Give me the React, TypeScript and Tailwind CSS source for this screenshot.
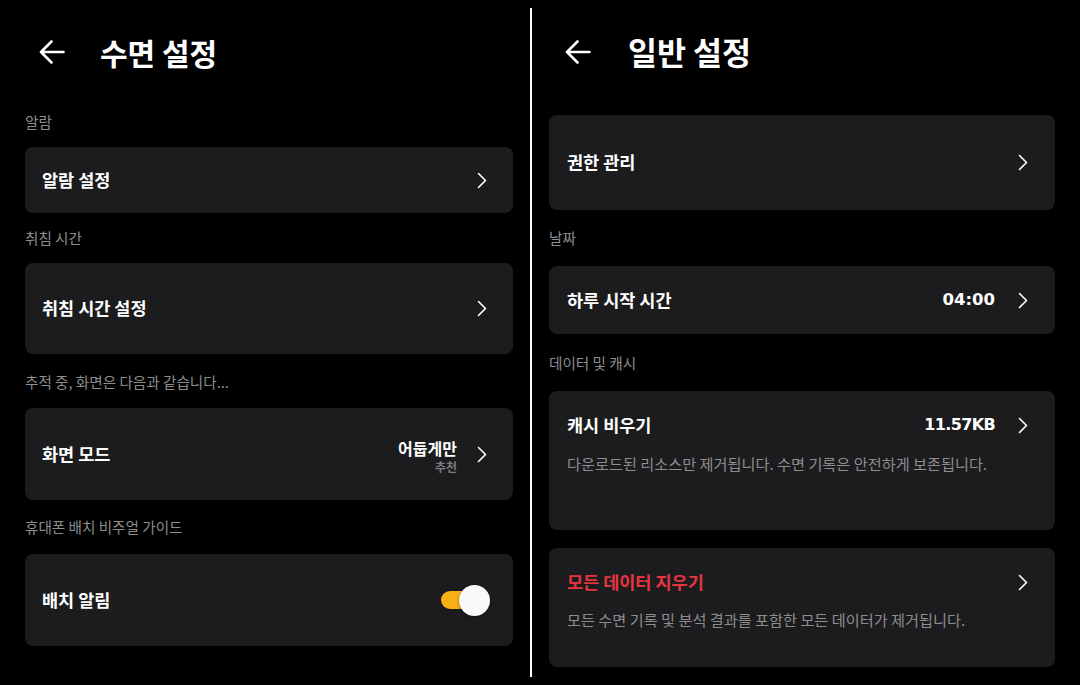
import React from "react";

const font = { fontFamily: '"Noto Sans CJK KR", "Noto Sans", sans-serif' };
const numFont = { fontFamily: '"DejaVu Sans", "Noto Sans", sans-serif', fontWeight: 700 };

function Chevron() {
  return (
    <svg width="10" height="17" viewBox="0 0 10 17" fill="none" className="shrink-0">
      <path d="M1.5 1.5 L8.5 8.5 L1.5 15.5" stroke="#ffffff" strokeWidth="1.6" strokeLinecap="round" strokeLinejoin="round" />
    </svg>
  );
}

function BackArrow() {
  return (
    <svg width="26" height="24" viewBox="0 0 26 24" fill="none" className="shrink-0">
      <path d="M2 12 H24.5 M12.5 1.5 L2 12 L12.5 22.5" stroke="#ffffff" strokeWidth="2.6" strokeLinecap="round" strokeLinejoin="round" />
    </svg>
  );
}

function Label({ children, mt }: { children: React.ReactNode; mt: string }) {
  return <div className={`${mt} h-[20px] text-[14.6px] leading-[20px] text-[#8d8d90]`}>{children}</div>;
}

export default function App() {
  return (
    <div className="flex h-[685px] w-[1080px] overflow-hidden bg-black" style={font}>
      {/* Left panel */}
      <div className="flex w-[530px] shrink-0 flex-col pr-[17px] pl-[25px]">
        <div className="flex h-[104px] items-center gap-[35px] pl-[14px]">
          <BackArrow />
          <span className="text-[30px] font-bold leading-none text-white">수면 설정</span>
        </div>
        <Label mt="mt-[8px]">알람</Label>
        <div className="mt-[15px] flex h-[66px] items-center justify-between rounded-[8px] bg-[#1c1c1e] pr-[26px] pl-[17px]">
          <span className="text-[17.5px] font-bold text-white">알람 설정</span>
          <Chevron />
        </div>
        <Label mt="mt-[15px]">취침 시간</Label>
        <div className="mt-[15px] flex h-[91px] items-center justify-between rounded-[8px] bg-[#1c1c1e] pr-[26px] pl-[17px]">
          <span className="text-[17.5px] font-bold text-white">취침 시간 설정</span>
          <Chevron />
        </div>
        <Label mt="mt-[18px]">추적 중, 화면은 다음과 같습니다...</Label>
        <div className="mt-[16px] flex h-[92px] items-center justify-between rounded-[8px] bg-[#1c1c1e] pr-[26px] pl-[17px]">
          <span className="text-[17.5px] font-bold text-white">화면 모드</span>
          <div className="flex items-center gap-[20px]">
            <div className="flex flex-col items-end pt-[4px]">
              <span className="text-[16px] leading-[22px] font-bold text-white">어둡게만</span>
              <span className="text-[12px] leading-[16px] font-bold text-[#7a7a7e]">추천</span>
            </div>
            <Chevron />
          </div>
        </div>
        <Label mt="mt-[17px]">휴대폰 배치 비주얼 가이드</Label>
        <div className="mt-[17px] flex h-[92px] items-center justify-between rounded-[8px] bg-[#1c1c1e] pr-[23px] pl-[17px]">
          <span className="text-[17.5px] font-bold text-white">배치 알림</span>
          <div className="relative h-[31px] w-[49px]">
            <div className="absolute top-[6px] left-0 h-[18px] w-[40px] rounded-full bg-[#f8b116]" />
            <div className="absolute top-0 right-0 h-[31px] w-[31px] rounded-full bg-[#fafafa] shadow-[0_1px_3px_rgba(0,0,0,0.5)]" />
          </div>
        </div>
      </div>

      {/* Divider */}
      <div className="mt-[8px] h-[669px] w-[2px] shrink-0 bg-white" />

      {/* Right panel */}
      <div className="flex flex-1 flex-col pr-[25px] pl-[17px]">
        <div className="flex h-[104px] items-center gap-[37px] pl-[16px]">
          <BackArrow />
          <span className="text-[31.5px] font-bold leading-none text-white">일반 설정</span>
        </div>
        <div className="mt-[11px] flex h-[95px] items-center justify-between rounded-[8px] bg-[#1c1c1e] pr-[27px] pl-[18px]">
          <span className="text-[17.5px] font-bold text-white">권한 관리</span>
          <Chevron />
        </div>
        <Label mt="mt-[18px]">날짜</Label>
        <div className="mt-[18px] flex h-[68px] items-center justify-between rounded-[8px] bg-[#1c1c1e] pr-[27px] pl-[18px]">
          <span className="text-[17.5px] font-bold text-white">하루 시작 시간</span>
          <div className="flex items-center gap-[23px]">
            <span className="text-[16.5px] text-white" style={numFont}>04:00</span>
            <Chevron />
          </div>
        </div>
        <Label mt="mt-[19px]">데이터 및 캐시</Label>
        <div className="mt-[18px] flex h-[139px] flex-col rounded-[8px] bg-[#1c1c1e] pt-[22px] pr-[27px] pl-[18px]">
          <div className="flex h-[24px] items-center justify-between">
            <span className="text-[17.5px] font-bold text-white">캐시 비우기</span>
            <div className="flex items-center gap-[23px]">
              <span className="text-[16px] tracking-[-0.04em] text-white" style={numFont}>11.57KB</span>
              <Chevron />
            </div>
          </div>
          <div className="mt-[16px] text-[15.2px] leading-[20px] text-[#8d8d90]">
            다운로드된 리소스만 제거됩니다. 수면 기록은 안전하게 보존됩니다.
          </div>
        </div>
        <div className="mt-[18px] flex h-[119px] flex-col rounded-[8px] bg-[#1c1c1e] pt-[22px] pr-[27px] pl-[18px]">
          <div className="flex h-[24px] items-center justify-between">
            <span className="text-[17.5px] font-bold text-[#e5353f]">모든 데이터 지우기</span>
            <Chevron />
          </div>
          <div className="mt-[15px] text-[15.2px] leading-[20px] text-[#8d8d90]">
            모든 수면 기록 및 분석 결과를 포함한 모든 데이터가 제거됩니다.
          </div>
        </div>
      </div>
    </div>
  );
}
